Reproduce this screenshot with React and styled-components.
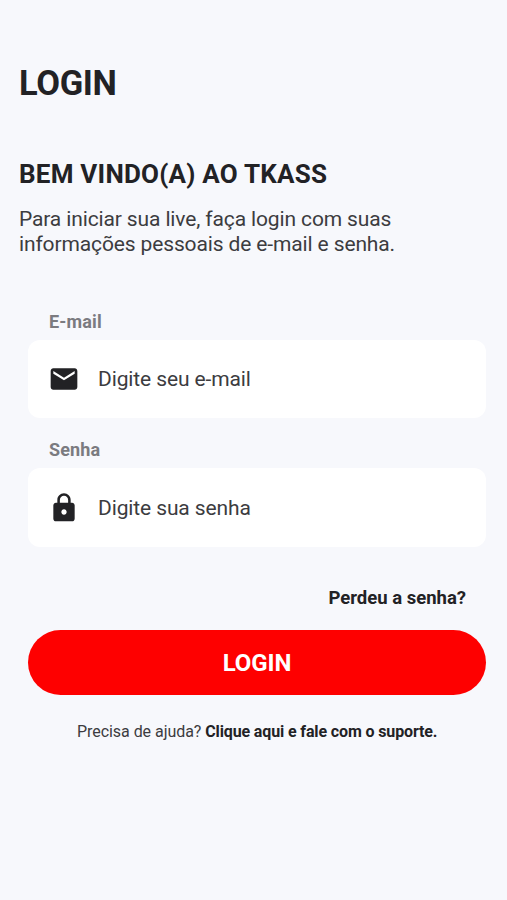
import React, { useState } from "react";
import styled, { createGlobalStyle } from "styled-components";
import { MdEmail, MdLock } from "react-icons/md";

const App = () => {
  const [email, setEmail] = useState("");
  const [password, setPassword] = useState("");

  const handleSubmit = (e) => {
    e.preventDefault();
  };

  return (
    <>
      <GlobalStyle />
      <Page>
        <Title>LOGIN</Title>
        <Welcome>BEM VINDO(A) AO TKASS</Welcome>
        <Description>
          Para iniciar sua live, faça login com suas
          <br />
          informações pessoais de e-mail e senha.
        </Description>
        <Form onSubmit={handleSubmit}>
          <Label htmlFor="email">E-mail</Label>
          <Field $height="78px">
            <MdEmail size={32} />
            <Input
              id="email"
              placeholder="Digite seu e-mail"
              value={email}
              onChange={(e) => setEmail(e.target.value)}
            />
          </Field>
          <Label htmlFor="password">Senha</Label>
          <Field $height="79px">
            <MdLock size={32} />
            <Input
              id="password"
              type="password"
              placeholder="Digite sua senha"
              value={password}
              onChange={(e) => setPassword(e.target.value)}
            />
          </Field>
          <ForgotLink href="#">Perdeu a senha?</ForgotLink>
          <LoginButton type="submit">LOGIN</LoginButton>
        </Form>
        <Help>
          Precisa de ajuda? <HelpLink href="#">Clique aqui e fale com o suporte.</HelpLink>
        </Help>
      </Page>
    </>
  );
};

const GlobalStyle = createGlobalStyle`
  * {
    box-sizing: border-box;
  }

  body {
    margin: 0;
    background-color: #f7f8fc;
    font-family: Roboto, sans-serif;
    color: #222225;
  }
`;

const Page = styled.main`
  min-height: 900px;
  padding: 62px 21px 0 19px;
  white-space: nowrap;
`;

const Title = styled.h1`
  margin: 0;
  font-size: 34.5px;
  line-height: 42px;
  font-weight: 700;
  letter-spacing: -0.35px;
`;

const Welcome = styled.h2`
  margin: 54px 0 0;
  font-size: 26px;
  line-height: 32px;
  font-weight: 700;
  letter-spacing: 0.23px;
`;

const Description = styled.p`
  margin: 17px 0 0;
  font-size: 21px;
  line-height: 24.5px;
  letter-spacing: -0.13px;
  color: #3c3c40;
`;

const Form = styled.form`
  display: flex;
  flex-direction: column;
  margin: 55px 0 0 9px;
`;

const Label = styled.label`
  margin-left: 21px;
  font-size: 18px;
  line-height: 22px;
  font-weight: 700;
  letter-spacing: 0.15px;
  color: #7b7b80;
`;

const Field = styled.div`
  display: flex;
  align-items: center;
  gap: 18px;
  height: ${(props) => props.$height};
  margin: 7px 0 21px;
  padding: 0 20px;
  border-radius: 12px;
  background-color: #fff;

  svg {
    flex-shrink: 0;
  }
`;

const Input = styled.input`
  flex: 1;
  min-width: 0;
  padding: 0;
  border: none;
  outline: none;
  background: transparent;
  font-family: inherit;
  font-size: 21px;
  letter-spacing: -0.12px;
  color: #3c3c40;

  &::placeholder {
    color: #3c3c40;
    opacity: 1;
  }
`;

const ForgotLink = styled.a`
  align-self: flex-end;
  margin: 18px 20px 0 0;
  font-size: 18.5px;
  line-height: 24px;
  font-weight: 700;
  color: inherit;
  text-decoration: none;
`;

const LoginButton = styled.button`
  height: 65px;
  margin-top: 20px;
  padding: 0;
  border: none;
  border-radius: 33px;
  background-color: #fe0000;
  color: #fff;
  font-family: inherit;
  font-size: 24px;
  font-weight: 700;
  letter-spacing: -0.1px;
  cursor: pointer;
`;

const Help = styled.p`
  margin: 27px 0 0;
  padding-left: 58px;
  font-size: 16px;
  line-height: 20px;
  letter-spacing: -0.05px;
  color: #3c3c40;
`;

const HelpLink = styled.a`
  font-weight: 700;
  letter-spacing: -0.13px;
  color: #222225;
  text-decoration: none;
`;

export default App;
